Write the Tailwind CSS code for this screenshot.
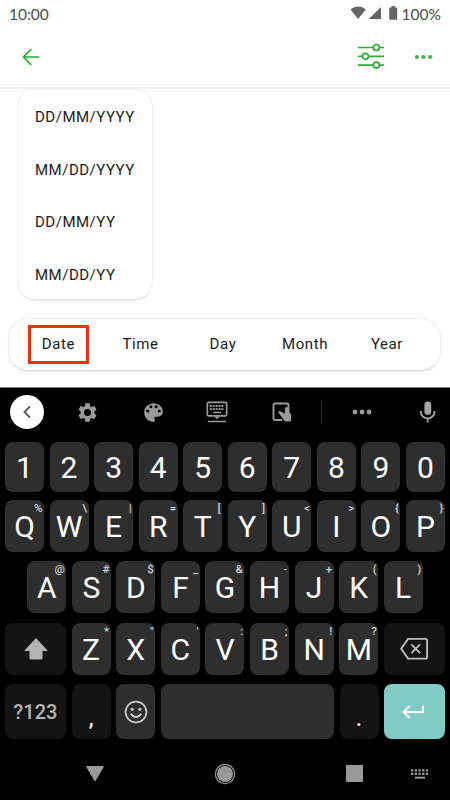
<!DOCTYPE html>
<html lang="en">
<head>
<meta charset="utf-8">
<title>Date format</title>
<script src="https://cdn.jsdelivr.net/npm/@tailwindcss/browser@4"></script>
</head>
<body class="w-[450px] h-[800px] overflow-hidden bg-white font-['Roboto',sans-serif] flex flex-col">
  <!-- Status bar -->
  <div class="h-7 shrink-0 flex items-center justify-between pl-[9px] pr-[9px] text-[#4c4c4c] font-['Lato',sans-serif] text-[15.5px] leading-7">
    <span>10:00</span>
    <div class="flex items-center">
      <svg width="48" height="16" viewBox="0 0 48 16" fill="#666" class="mr-[4px]">
        <path d="M0.5 3.6C4.5-.4 12-.4 15.7 3.6L8.1 13Z"/>
        <path d="M31 .9V13H18.7Z"/>
        <path d="M41.5 0h3.6v1.4h1.4q.7 0 .7.7v11q0 .7-.7.7h-6.600q-.7 0-.7-.7v-11q0-.7.7-.7h1.600z"/>
      </svg>
      <span>100%</span>
    </div>
  </div>
  <!-- App bar -->
  <header class="h-[61px] shrink-0 flex items-center justify-between pl-[22px] pr-[17px] pb-[2px] border-b-2 border-[#f0f0f0]">
    <svg width="18" height="18" viewBox="0 0 18 18" fill="none" stroke="#2eab35" stroke-width="1.7"><path d="M17.300 9H1.500M9.300 1.200L1.500 9l7.800 7.800"/></svg>
    <div class="flex items-center">
      <svg width="28" height="26" viewBox="0 0 28 26" fill="none" stroke="#2eab35" stroke-width="1.7" class="mr-[29px] -mt-[2px]">
        <path d="M1 4.500h15.200M22.500 4.500H27M1 13.300h4.300M11.700 13.300H27M1 22.100h15.200M22.500 22.100H27"/>
        <circle cx="19.400" cy="4.500" r="3"/><circle cx="8.500" cy="13.300" r="3"/><circle cx="19.400" cy="22.100" r="3"/>
      </svg>
      <svg width="19" height="6" viewBox="0 0 19 6" fill="#3fb045"><circle cx="3" cy="3" r="2.100"/><circle cx="9.500" cy="3" r="2.100"/><circle cx="16.200" cy="3" r="2.100"/></svg>
    </div>
  </header>
  <!-- Format menu -->
  <main class="h-[298px] shrink-0 px-[9px] text-[15px] text-[#1c1c1c]">
    <ul class="ml-2 w-[136px] h-[211px] rounded-[18px] border border-[#f0f0f0] border-b-[#e2e2e2] shadow-[0_1px_1px_rgba(0,0,0,0.05)] pl-[17px] tracking-[0.5px] flex flex-col">
      <li class="h-[52.500px] leading-[54px]">DD/MM/YYYY</li>
      <li class="h-[52.500px] leading-[54px]">MM/DD/YYYY</li>
      <li class="h-[52.500px] leading-[54px]">DD/MM/YY</li>
      <li class="h-[52.500px] leading-[54px]">MM/DD/YY</li>
    </ul>
    <div class="mt-[18px] w-[433px] h-[53px] -ml-px rounded-[20px] border border-[#f0f0f0] border-b-[#dcdcdc] shadow-[0_1px_1px_rgba(0,0,0,0.08)] flex items-center tracking-[0.6px] pl-[19px]">
      <span class="w-[61px] h-[39px] border-3 border-[#f9300d] flex items-center justify-center">Date</span>
      <span class="w-[103px] text-center">Time</span>
      <span class="w-[62px] text-center">Day</span>
      <span class="w-[102px] text-center">Month</span>
      <span class="w-[62px] text-center">Year</span>
    </div>
  </main>
  <!-- Keyboard -->
  <section class="grow bg-black border-t border-[#777] flex flex-col px-[5px]">
    <div class="h-[54px] shrink-0 flex items-center pl-[5px] pr-[8px] pb-[6px]">
      <span class="size-[34px] rounded-full bg-white flex items-center justify-center">
        <svg width="34" height="34" viewBox="0 0 34 34" fill="none" stroke="#555" stroke-width="1.900"><path d="M20 11.300L14.500 17l5.500 5.700"/></svg>
      </span>
      <svg class="ml-[32px]" width="23" height="23" viewBox="0 0 24 24" fill="#9a9a9a"><path d="M19.140 12.940c.04-.3.060-.610.060-.940 0-.320-.020-.640-.070-.940l2.030-1.580c.180-.140.230-.410.120-.610l-1.920-3.320c-.120-.220-.370-.290-.590-.220l-2.390.960c-.5-.380-1.030-.7-1.620-.940l-.360-2.540c-.040-.240-.240-.410-.480-.410h-3.840c-.240 0-.430.170-.470.410l-.360 2.540c-.590.240-1.130.570-1.620.940l-2.390-.960c-.220-.080-.470 0-.590.220L2.740 8.870c-.120.210-.080.470.120.610l2.030 1.580c-.050.300-.090.630-.090.940s.020.640.070.940l-2.030 1.580c-.180.140-.230.410-.120.610l1.920 3.320c.120.220.370.290.590.220l2.390-.960c.5.380 1.030.7 1.620.940l.360 2.540c.050.240.240.410.480.410h3.840c.240 0 .440-.170.470-.410l.360-2.540c.590-.240 1.130-.560 1.620-.940l2.390.960c.220.080.470 0 .590-.220l1.920-3.320c.120-.220.070-.470-.120-.610zM12 15.600A3.600 3.600 0 1 1 12 8.400a3.600 3.600 0 0 1 0 7.200z"/></svg>
      <svg class="ml-[42px]" width="25" height="25" viewBox="0 0 24 24" fill="#9a9a9a"><path d="M12 3a9 9 0 0 0 0 18c.830 0 1.500-.670 1.500-1.500 0-.390-.150-.740-.390-1.010-.230-.260-.380-.610-.380-.990 0-.830.670-1.500 1.500-1.500H16c2.760 0 5-2.240 5-5 0-4.420-4.030-8-9-8zm-5.500 9a1.500 1.500 0 1 1 0-3 1.500 1.500 0 0 1 0 3zm3-4a1.500 1.500 0 1 1 0-3 1.500 1.500 0 0 1 0 3zm5 0a1.500 1.500 0 1 1 0-3 1.500 1.500 0 0 1 0 3zm3 4a1.500 1.500 0 1 1 0-3 1.500 1.500 0 0 1 0 3z"/></svg>
      <svg class="ml-[40px]" width="22" height="22" viewBox="0 0 22 22" fill="none" stroke="#9a9a9a"><rect x="1.300" y="1.300" width="19.400" height="13.600" rx="1.500" stroke-width="1.700"/><path stroke-width="1.900" stroke-dasharray="1.900 1" d="M3.900 5h14.400M3.900 8h14.400"/><path stroke-width="1.500" d="M7 11.500h8M2 20.500h18"/><path d="M8 15.500h6l-3 2.800z" fill="#9a9a9a" stroke="none"/></svg>
      <svg class="ml-[44px]" width="20" height="20" viewBox="0 0 20 20"><path d="M10 18H3q-1.500 0-1.500-1.500V3Q1.500 1.500 3 1.500h12Q16.500 1.500 16.500 3v8" fill="none" stroke="#9a9a9a" stroke-width="1.900"/><path d="M6.200 10.200q.8-1.700 2.600-.8l4.200 2.400V6.500q.2-1.400 1.700-1.400 1.400 0 1.500 1.400v3.400l1.800 1.200q1.200.9 1.200 2.200v4.600q-.1 1.500-1.500 1.500h-3.500q-1.200 0-2-.9z" fill="#9a9a9a"/></svg>
      <span class="ml-[29px] w-px h-[24px] bg-[#292929]"></span>
      <svg class="ml-[30px]" width="20" height="6" viewBox="0 0 20 6" fill="#9a9a9a"><circle cx="3" cy="3" r="2.400"/><circle cx="10" cy="3" r="2.400"/><circle cx="17" cy="3" r="2.400"/></svg>
      <svg class="ml-auto" width="18" height="23" viewBox="0 0 18 23"><rect x="5.400" y="0.500" width="6.800" height="13.300" rx="3.400" fill="#a4a4a4"/><path d="M1.800 10v.5a6.900 6.900 0 0 0 13.800 0v-.5M8.700 17.500v4" fill="none" stroke="#a4a4a4" stroke-width="1.900"/></svg>
    </div>
    <div data-keys="1 2 3 4 5 6 7 8 9 0" class="h-[50px] shrink-0 flex justify-between"></div>
    <div data-keys="Q% W\ E| R= T[ Y] U&lt; I&gt; O{ P}" class="mt-2 h-[52px] shrink-0 flex justify-between"></div>
    <div data-keys="A@ S# D$ F_ G&amp; H- J+ K( L)" class="mt-[9px] h-[52px] shrink-0 flex justify-between px-[22.300px]"></div>
    <div class="mt-[10px] h-[52px] shrink-0 flex gap-[5.500px]">
      <span class="w-[61px] rounded-[8px] bg-[#141414] flex items-center justify-center">
        <svg width="24" height="24" viewBox="0 0 24 24" fill="#b4b4b4" stroke="#b4b4b4" stroke-linejoin="round"><path d="M12 1.500L23 13.500h-5v8.500H6v-8.500H1z"/></svg>
      </span>
      <div data-keys="Z* X&quot; C' V: B; N! M?" class="grow flex justify-between"></div>
      <span class="w-[61px] rounded-[8px] bg-[#141414] flex items-center justify-center">
        <svg width="29" height="24" viewBox="0 0 29 24" fill="none" stroke="#bcbcbc" stroke-width="1.900"><path d="M8 1.900h17.500q1.600 0 1.600 1.600v16.500q0 1.600-1.600 1.600H8L1.200 11.800zM11.300 7.300l8.800 8.800M20.100 7.300l-8.800 8.800"/></svg>
      </span>
    </div>
    <div class="mt-[9px] h-[55px] shrink-0 flex gap-[5.500px]">
      <span class="w-[61px] rounded-[8px] bg-[#141414] text-[#b4b4b4] text-[20px] font-medium flex items-center justify-center">?123</span>
      <span class="w-[39px] rounded-[8px] bg-[#141414] text-white text-[24px] leading-[68px] text-center">,</span>
      <span class="w-[39px] rounded-[8px] bg-[#2e2e2e] flex items-center justify-center">
        <svg width="24" height="24" viewBox="0 0 24 24" fill="none" stroke="#c2c2c2" stroke-width="1.800"><circle cx="12" cy="12" r="10.400"/><path d="M7 13.500q1.600 3.400 5 3.400t5-3.400"/><g fill="#c2c2c2" stroke="none"><circle cx="8.200" cy="9.300" r="1.600"/><circle cx="15.800" cy="9.300" r="1.600"/></g></svg>
      </span>
      <span class="grow rounded-[8px] bg-[#2e2e2e]"></span>
      <span class="w-[39px] rounded-[8px] bg-[#141414] text-white text-[26px] leading-[66px] text-center">.</span>
      <span class="w-[61px] rounded-[8px] bg-[#80cbc4] flex items-center justify-center">
        <svg width="24" height="16" viewBox="0 0 24 16" fill="none" stroke="#fff" stroke-width="2" class="-ml-[3px]"><path d="M22 1.500V8H3M8.500 2L2.500 8l6 6"/></svg>
      </span>
    </div>
    <!-- Navigation bar -->
    <nav class="grow flex items-center pt-[8px] pl-[80px]">
      <svg width="20" height="18" viewBox="0 0 20 18" fill="#999" stroke="#999" stroke-linejoin="round"><path d="M1.500 1.500h17L10 16z"/></svg>
      <svg class="ml-[109px]" width="22" height="22" viewBox="0 0 22 22"><circle cx="11" cy="11" r="9.600" fill="none" stroke="#999" stroke-width="1.200"/><circle cx="11" cy="11" r="8" fill="#999"/></svg>
      <span class="ml-[110px] size-[17px] rounded-[1px] bg-[#999]"></span>
      <svg class="ml-[47px]" width="20" height="12" viewBox="0 0 20 12" fill="none" stroke="#999"><path stroke-width="2.200" stroke-dasharray="2.300 1.400" d="M1 2.300h17.500M1 5.900h17.500"/><path stroke-width="2" d="M5 9.700h10"/></svg>
    </nav>
  </section>
  <script>
    // Each token is a key's main character followed by its optional long-press hint.
    document.querySelectorAll('[data-keys]').forEach(function (row) {
      row.dataset.keys.split(' ').forEach(function (token) {
        var key = document.createElement('span');
        key.className = 'relative w-[39px] rounded-[8px] bg-[#2e2e2e] text-white text-[30px] flex items-center justify-center pt-[1px]';
        key.textContent = token[0];
        if (token[1]) {
          var hint = document.createElement('span');
          hint.className = 'absolute top-[2px] right-[1.5px] text-[11.5px] font-medium leading-[13px] text-[#cfcfcf]';
          hint.textContent = token[1];
          key.appendChild(hint);
        }
        row.appendChild(key);
      });
    });
  </script>
</body>
</html>
